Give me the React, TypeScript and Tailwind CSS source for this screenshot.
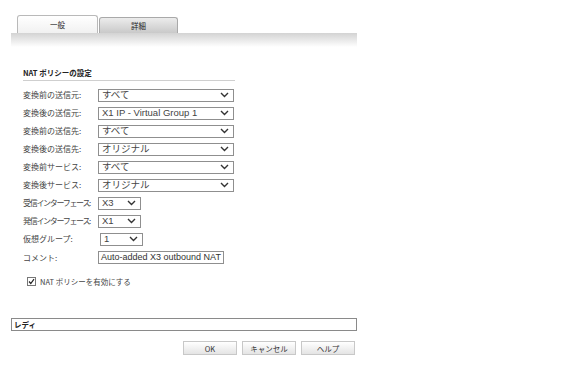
const JP = { fontFamily: '"Noto Sans CJK JP", "Liberation Sans", sans-serif' }
const AR = { fontFamily: '"Liberation Sans", "Noto Sans CJK JP", sans-serif' }

const ROWS = [
  { label: '変換前の送信元:', value: 'すべて', wide: true },
  { label: '変換後の送信元:', value: 'X1 IP - Virtual Group 1', wide: true },
  { label: '変換前の送信先:', value: 'すべて', wide: true },
  { label: '変換後の送信先:', value: 'オリジナル', wide: true },
  { label: '変換前サービス:', value: 'すべて', wide: true },
  { label: '変換後サービス:', value: 'オリジナル', wide: true },
  { label: '受信インターフェース:', value: 'X3', wide: false, tight: true },
  { label: '発信インターフェース:', value: 'X1', wide: false, tight: true },
  { label: '仮想グループ:', value: '1', wide: false, shift: true },
]

function Chevron() {
  return (
    <svg width="9" height="6" viewBox="0 0 9 6" className="shrink-0">
      <path d="M1 1 L4.5 4.5 L8 1" fill="none" stroke="#333" strokeWidth="1.4" />
    </svg>
  )
}

function Select({ value, wide }: { value: string; wide: boolean }) {
  return (
    <div
      className={
        'flex h-[13px] items-center justify-between border border-[#8f8f8f] bg-white pl-[3px] pr-[4px] ' +
        (wide ? 'w-[136px]' : 'w-[43px]')
      }
    >
      <span className="text-[9.5px] leading-none text-[#444]" style={AR}>
        {value}
      </span>
      <Chevron />
    </div>
  )
}

function Button({ children }: { children: string }) {
  return (
    <div
      className="flex h-[14px] w-[54px] items-center justify-center border border-[#c8c8c8] bg-gradient-to-b from-white to-[#e4e4e4] text-[7.5px] text-[#333]"
      style={JP}
    >
      {children}
    </div>
  )
}

export default function App() {
  return (
    <div className="h-[374px] w-[576px] overflow-hidden bg-white">
      {/* tabs */}
      <div className="flex h-[33px] items-end pl-[17px]">
        <div
          className="flex h-[18px] w-[81px] items-center justify-center rounded-t-[3px] border border-b-0 border-[#b9b9b9] bg-gradient-to-b from-white to-[#f1f1f1] text-[7.5px] text-[#222]"
          style={JP}
        >
          一般
        </div>
        <div
          className="ml-[1px] flex h-[16px] w-[79px] items-center justify-center rounded-t-[3px] border border-b-0 border-[#a9a9a9] bg-gradient-to-b from-[#ececec] to-[#c9c9c9] text-[7.5px] text-[#222]"
          style={JP}
        >
          詳細
        </div>
      </div>
      <div className="ml-[11px] h-[14px] w-[346px] bg-gradient-to-b from-[#d3d3d3] to-white" />

      <div className="pl-[23px]">
        <div className="mt-[21px] w-[212px] border-b border-[#cfcfcf] pb-[2px] text-[7.5px] font-bold leading-[10px] text-[#222]" style={JP}>
          NAT ポリシーの設定
        </div>

        <div className="mt-[5px] flex flex-col">
          {ROWS.map((r) => (
            <div key={r.label} className="flex h-[18px] items-center">
              <span
                className={
                  'w-[75px] shrink-0 whitespace-nowrap text-[8px] text-[#444] ' +
                  (r.tight ? 'tracking-[-1.3px]' : '') +
                  (r.shift ? ' pr-[2px] box-content' : '')
                }
                style={JP}
              >
                {r.label}
              </span>
              <Select value={r.value} wide={r.wide} />
            </div>
          ))}
          <div className="flex h-[19px] items-center">
            <span className="w-[75px] shrink-0 text-[8px] text-[#444]" style={JP}>
              コメント:
            </span>
            <div className="flex h-[13px] w-[126px] items-center overflow-hidden whitespace-nowrap border border-[#8f8f8f] bg-white pl-[2px]">
              <span className="text-[9px] leading-none text-[#333]" style={AR}>
                Auto-added X3 outbound NAT
              </span>
            </div>
          </div>
          <div className="mt-[9px] flex items-center pl-[4px]">
            <div className="flex h-[9px] w-[9px] items-center justify-center border border-[#777] bg-white">
              <svg width="7" height="7" viewBox="0 0 7 7">
                <path d="M1 3.5 L2.8 5.5 L6 1.2" fill="none" stroke="#222" strokeWidth="1.2" />
              </svg>
            </div>
            <span className="ml-[4px] text-[7.5px] text-[#444]" style={JP}>
              NAT ポリシーを有効にする
            </span>
          </div>
        </div>
      </div>

      {/* status */}
      <div className="ml-[11px] mt-[31px] flex h-[13px] w-[346px] items-center border border-[#8a8a8a] pl-[2px]">
        <span className="text-[7.5px] font-bold text-[#222]" style={JP}>
          レディ
        </span>
      </div>

      <div className="ml-[183px] mt-[10px] flex gap-[5px]">
        <Button>OK</Button>
        <Button>キャンセル</Button>
        <Button>ヘルプ</Button>
      </div>
    </div>
  )
}
